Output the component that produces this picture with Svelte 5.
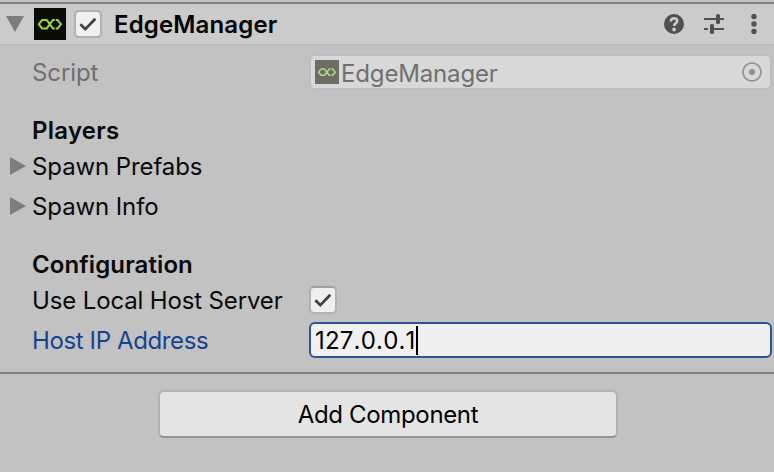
<script>
  let enabled = $state(true);
  let useLocalHost = $state(true);
</script>

{#snippet logo()}
  <svg class="logo" viewBox="0 0 32 32">
    <rect width="32" height="32" fill="#090c02" />
    <path d="M11 12H8.2L4.8 16.2l3.4 4.2H11M21.8 12h1.8l3.4 4.2-3.4 4.2h-1.8M10.8 12h1.9l6.2 8.4h1.9M20.8 12h-1.9l-6.2 8.4h-1.9" fill="none" stroke="#9bd43c" stroke-width="2" />
  </svg>
{/snippet}

{#snippet check(on)}
  {#if on}
    <svg viewBox="0 0 24 24" width="24" height="24">
      <path d="M4.4 12.3l4.9 4.8L19.3 6.8" fill="none" stroke="#404040" stroke-width="2.7" />
    </svg>
  {/if}
{/snippet}

<div class="inspector">
  <header>
    <svg class="fold" viewBox="0 0 18 16"><path d="M0 0h18L9 16z" fill="#7d7d7d" /></svg>
    {@render logo()}
    <button class="check" aria-label="Enabled" onclick={() => (enabled = !enabled)}>{@render check(enabled)}</button>
    <h1>EdgeManager</h1>
    <div class="tools">
      <svg width="20" height="20" viewBox="0 0 20 20">
        <circle cx="10" cy="10" r="10" fill="#505050" />
        <path d="M6.8 7.4C6.8 5.2 8.2 4.4 10 4.4s3.2 .9 3.2 2.7c0 2.2-3.1 2.3-3.1 5" fill="none" stroke="#cbcbcb" stroke-width="2.6" />
        <circle cx="10.1" cy="15.5" r="1.9" fill="#cbcbcb" />
      </svg>
      <svg width="20" height="20" viewBox="0 0 20 20" fill="#505050">
        <path d="M0 4h12v2H0zM15 4h5v2h-5zM0 14h4v2H0zM7 14h13v2H7z" />
        <rect x="12" y="0" width="4" height="10" rx="1.6" />
        <rect x="6" y="10" width="4" height="10" rx="1.6" />
      </svg>
      <svg width="20" height="20" viewBox="0 0 20 20" fill="#505050">
        <circle cx="10" cy="2.5" r="2.7" /><circle cx="10" cy="10" r="2.7" /><circle cx="10" cy="17.5" r="2.7" />
      </svg>
    </div>
  </header>

  <main>
    <div class="row script">
      <span class="label">Script</span>
      <div class="object">
        {@render logo()}
        <span class="name">EdgeManager</span>
        <svg class="pick" width="20" height="20" viewBox="0 0 20 20">
          <circle cx="10" cy="10" r="9" fill="none" stroke="#929292" stroke-width="1.7" />
          <circle cx="10" cy="10" r="3.1" fill="#929292" />
        </svg>
      </div>
    </div>

    <h2 class="players">Players</h2>
    <div class="row foldout">
      <svg viewBox="0 0 16 18"><path d="M0 0v18l16-9z" fill="#7d7d7d" /></svg>
      <span class="label">Spawn Prefabs</span>
    </div>
    <div class="row foldout info">
      <svg viewBox="0 0 16 18"><path d="M0 0v18l16-9z" fill="#7d7d7d" /></svg>
      <span class="label">Spawn Info</span>
    </div>

    <h2 class="configuration">Configuration</h2>
    <div class="row">
      <span class="label local">Use Local Host Server</span>
      <button class="check" aria-label="Use Local Host Server" onclick={() => (useLocalHost = !useLocalHost)}>{@render check(useLocalHost)}</button>
    </div>
    <div class="row host">
      <span class="label">Host IP Address</span>
      <div class="field"><span>127.0.0.1</span><i></i></div>
    </div>
  </main>

  <footer>
    <button class="add">Add Component</button>
  </footer>
</div>

<style>
  :global(body) { background: #c2c2c2; }
  .inspector {
    box-sizing: border-box;
    width: 774px;
    height: 472px;
    padding-top: 2px;
    overflow: hidden;
    background: #c2c2c2;
    color: #090909;
    font: 400 24px/36px Inter, sans-serif;
    white-space: nowrap;
  }
  svg { display: block; flex: none; }
  button { font: inherit; color: inherit; padding: 0; margin: 0; }
  header {
    box-sizing: border-box;
    display: flex;
    align-items: center;
    height: 44px;
    padding-left: 6px;
    border-top: 2px solid #7f7f7f;
    border-bottom: 2px solid #bababa;
    background: #cbcbcb;
  }
  .fold { width: 18px; height: 16px; margin-right: 10px; }
  header .logo { width: 32px; height: 32px; margin-right: 8px; }
  .check {
    box-sizing: border-box;
    display: flex;
    align-items: center;
    justify-content: center;
    flex: none;
    width: 28px;
    height: 28px;
    border: 2px solid #b2b2b2;
    border-radius: 5px;
    background: #f0f0f0;
  }
  main .check { border-top-color: #a0a0a0; }
  h1, h2 { box-sizing: border-box; height: 36px; margin: 0; padding-top: 1px; font-size: 24px; font-weight: 600; line-height: 36px; }
  h1 { margin-left: 12px; color: #000; letter-spacing: .15px; }
  .tools { display: flex; gap: 20px; margin-left: auto; padding-right: 10px; }
  main { padding: 8px 2px 0 0; }
  .row { display: flex; align-items: center; height: 36px; }
  .label { box-sizing: border-box; width: 309px; padding: 2px 0 0 32px; letter-spacing: -.1px; }
  .script { color: #707070; }
  .object {
    box-sizing: border-box;
    display: flex;
    align-items: center;
    flex: 1;
    height: 36px;
    padding: 0 8px 0 4px;
    border: 2px solid #bebebe;
    border-radius: 6px;
    background: #d8d8d8;
  }
  .object .logo { width: 24px; height: 24px; opacity: .52; }
  .object .name { margin-left: 2px; padding-top: 4px; letter-spacing: -.15px; }
  .pick { margin-left: auto; }
  h2 { padding-left: 32px; letter-spacing: .1px; }
  .players { margin-top: 22px; letter-spacing: .25px; }
  .configuration { margin-top: 22px; }
  .foldout svg { width: 16px; height: 18px; margin-left: 10px; }
  .foldout .label { padding-left: 6px; }
  .local { letter-spacing: -.14px; }
  .info { margin-top: 4px; }
  .host { margin-top: 4px; color: #15428f; }
  .host .label { letter-spacing: -.38px; }
  .field {
    box-sizing: border-box;
    display: flex;
    align-items: center;
    flex: 1;
    height: 36px;
    padding-left: 4px;
    border: 2px solid #2c5490;
    border-radius: 6px;
    background: #f0f0f0;
    color: #000;
  }
  .field span { padding-top: 2px; font-kerning: none; font-feature-settings: "calt" 0; letter-spacing: .2px; }
  .field i { width: 2px; height: 29px; background: #000; }
  footer {
    display: flex;
    justify-content: center;
    margin-top: 14px;
    padding: 16px 0 0 2px;
    border-top: 2px solid #7f7f7f;
  }
  .add {
    box-sizing: border-box;
    width: 460px;
    height: 48px;
    padding-top: 2px;
    border: 2px solid #b2b2b2;
    border-bottom-color: #939393;
    border-radius: 6px;
    background: #e4e4e4;
    color: #000;
    letter-spacing: -.35px;
  }
</style>
